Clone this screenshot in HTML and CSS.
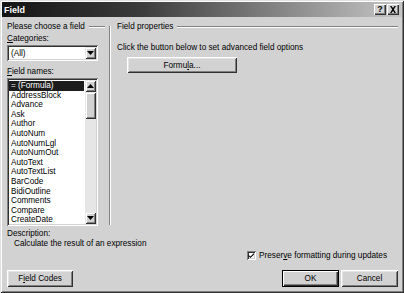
FILE: index.html
```html
<!DOCTYPE html>
<html lang="en">

<head>
    <meta charset="UTF-8" />
    <title>Field</title>
    <link rel="stylesheet" href="styles.css">
</head>

<body>
    <div class="dialog">
        <div class="titlebar">
            <span class="title">Field</span>
            <div class="tb-buttons">
                <span class="tb-btn help">?</span>
                <span class="tb-btn close">
                    <svg width="8" height="7" viewBox="0 0 8 7">
                        <path d="M1 0h1.5l1.5 2 1.5-2H7L4.8 3.5 7 7H5.5L4 5 2.5 7H1l2.2-3.5z" fill="#000" />
                    </svg>
                </span>
            </div>
        </div>

        <div class="content">
            <div class="panes">
                <div class="left-pane">
                    <div class="group-label"><span>Please choose a field</span></div>
                    <div class="field-label"><u>C</u>ategories:</div>
                    <div class="combo">
                        <span class="combo-value">(All)</span>
                        <span class="arrow-btn">
                            <svg width="7" height="4" viewBox="0 0 7 4"><path d="M0 0h7L3.5 4z" fill="#000" /></svg>
                        </span>
                    </div>
                    <div class="field-label names"><u>F</u>ield names:</div>
                    <div class="listbox">
                        <ul class="items">
                            <li class="selected">= (Formula)</li>
                            <li>AddressBlock</li>
                            <li>Advance</li>
                            <li>Ask</li>
                            <li>Author</li>
                            <li>AutoNum</li>
                            <li>AutoNumLgl</li>
                            <li>AutoNumOut</li>
                            <li>AutoText</li>
                            <li>AutoTextList</li>
                            <li>BarCode</li>
                            <li>BidiOutline</li>
                            <li>Comments</li>
                            <li>Compare</li>
                            <li>CreateDate</li>
                        </ul>
                        <div class="vscroll">
                            <span class="arrow-btn">
                                <svg width="7" height="4" viewBox="0 0 7 4"><path d="M0 4h7L3.5 0z" fill="#000" /></svg>
                            </span>
                            <div class="track">
                                <span class="thumb"></span>
                            </div>
                            <span class="arrow-btn">
                                <svg width="7" height="4" viewBox="0 0 7 4"><path d="M0 0h7L3.5 4z" fill="#000" /></svg>
                            </span>
                        </div>
                    </div>
                </div>

                <div class="divider"></div>

                <div class="right-pane">
                    <div class="group-label"><span>Field properties</span></div>
                    <p class="hint">Click the button below to set advanced field options</p>
                    <button class="btn formula">Formu<u>l</u>a...</button>
                </div>
            </div>

            <div class="description">
                <div>Description:</div>
                <div class="desc-text">Calculate the result of an expression</div>
            </div>

            <div class="preserve">
                <span class="checkbox">
                    <svg width="7" height="7" viewBox="0 0 7 7"><path d="M0 3l2 2 5-5v2L2 7 0 5z" fill="#000" /></svg>
                </span>
                <span>Preser<u>v</u>e formatting during updates</span>
            </div>

            <div class="footer">
                <button class="btn codes">F<u>i</u>eld Codes</button>
                <div class="footer-right">
                    <button class="btn default">OK</button>
                    <button class="btn">Cancel</button>
                </div>
            </div>
        </div>
    </div>
</body>

</html>
```

FILE: styles.css
```css
* {
    box-sizing: border-box;
}

body {
    margin: 0;
    font-family: 'Liberation Sans', Arial, sans-serif;
    font-size: 8.2px;
    color: #000;
    background: #d2d2d2;
}

u {
    text-decoration: underline;
    text-underline-offset: 1px;
}

.dialog {
    width: 404px;
    height: 293px;
    padding: 2px;
    background: #d2d2d2;
    box-shadow: inset 1px 1px #e0e0e0, inset -1px -1px #303030,
        inset 2px 2px #fff, inset -2px -2px #808080;
    display: flex;
    flex-direction: column;
}

.titlebar {
    height: 15px;
    background: linear-gradient(to right, #141414, #3c3c3c 35%, #c6c6c6);
    display: flex;
    align-items: center;
    justify-content: space-between;
    padding: 0 3px 0 2px;
}

.title {
    color: #fff;
    font-weight: bold;
    font-size: 9px;
}

.tb-buttons {
    display: flex;
    gap: 1px;
}

.tb-btn {
    width: 12px;
    height: 11px;
    background: #d2d2d2;
    box-shadow: inset 1px 1px #fff, inset -1px -1px #303030, inset -2px -2px #808080;
    display: flex;
    align-items: center;
    justify-content: center;
    font-weight: bold;
    font-size: 9px;
    line-height: 1;
}

.content {
    flex: 1;
    padding: 5px 4px 0 5px;
    display: flex;
    flex-direction: column;
}

.panes {
    display: flex;
}

.left-pane {
    width: 98px;
}

.group-label {
    display: flex;
    align-items: center;
    height: 10px;
    line-height: 10px;
}

.group-label::after {
    content: "";
    flex: 1;
    height: 0;
    margin-left: 4px;
    border-top: 1px solid #808080;
    border-bottom: 1px solid #fff;
}

.field-label {
    height: 10px;
    line-height: 10px;
    margin-top: 2px;
}

.field-label.names {
    margin-top: 6px;
}

.combo {
    width: 91px;
    height: 16px;
    margin-top: 1px;
    background: #fff;
    box-shadow: inset 1px 1px #808080, inset -1px -1px #fff,
        inset 2px 2px #303030, inset -2px -2px #d2d2d2;
    display: flex;
    align-items: center;
    justify-content: space-between;
    padding: 2px;
}

.combo-value {
    padding-left: 2px;
}

.arrow-btn {
    width: 11px;
    height: 12px;
    background: #d2d2d2;
    box-shadow: inset 1px 1px #e8e8e8, inset -1px -1px #303030,
        inset 2px 2px #fff, inset -2px -2px #808080;
    display: flex;
    align-items: center;
    justify-content: center;
    flex: none;
}

.listbox {
    width: 91px;
    height: 148px;
    margin-top: 1px;
    background: #fff;
    box-shadow: inset 1px 1px #808080, inset -1px -1px #fff,
        inset 2px 2px #303030, inset -2px -2px #d2d2d2;
    padding: 2px;
    display: flex;
    overflow: hidden;
}

.items {
    flex: 1;
    list-style: none;
    margin: 0;
    padding: 1px 0 0 0;
    overflow: hidden;
}

.items li {
    height: 9.6px;
    line-height: 9.6px;
    padding-left: 2px;
    white-space: nowrap;
}

.items li.selected {
    background: #1c1c1c;
    color: #fff;
    margin-right: 1px;
}

.vscroll {
    width: 11px;
    display: flex;
    flex-direction: column;
}

.track {
    flex: 1;
    background: #e6e6e6;
}

.thumb {
    display: block;
    height: 27px;
    background: #d2d2d2;
    box-shadow: inset 1px 1px #e8e8e8, inset -1px -1px #303030,
        inset 2px 2px #fff, inset -2px -2px #808080;
}

.divider {
    width: 2px;
    margin: 4px 6px 1px 4px;
    border-left: 1px solid #808080;
    border-right: 1px solid #fff;
}

.right-pane {
    flex: 1;
}

.hint {
    margin: 11px 0 0 0;
    line-height: 10px;
}

.btn {
    font: inherit;
    color: #000;
    background: #d2d2d2;
    border: none;
    padding: 0;
    height: 17px;
    box-shadow: inset 1px 1px #fff, inset -1px -1px #303030,
        inset 2px 2px #e4e4e4, inset -2px -2px #808080;
}

.formula {
    display: block;
    width: 110px;
    height: 16px;
    margin: 4px 0 0 10px;
}

.description {
    margin-top: 3px;
    line-height: 9.5px;
}

.desc-text {
    padding-left: 7px;
}

.preserve {
    margin-top: 3px;
    align-self: flex-end;
    display: flex;
    align-items: center;
    gap: 3px;
    margin-right: 11px;
}

.checkbox {
    width: 9px;
    height: 9px;
    background: #fff;
    box-shadow: inset 1px 1px #808080, inset -1px -1px #fff,
        inset 2px 2px #303030, inset -2px -2px #d2d2d2;
    display: flex;
    align-items: center;
    justify-content: center;
}

.checkbox svg {
    width: 5px;
    height: 5px;
}

.footer {
    margin-top: 10px;
    display: flex;
    justify-content: space-between;
    align-items: center;
}

.codes {
    width: 66px;
}

.footer-right {
    display: flex;
    gap: 2px;
}

.footer-right .btn {
    width: 57px;
}

.btn.default {
    box-shadow: inset 0 0 0 1px #000, inset 2px 2px #fff, inset -2px -2px #303030,
        inset -3px -3px #808080;
}
```
